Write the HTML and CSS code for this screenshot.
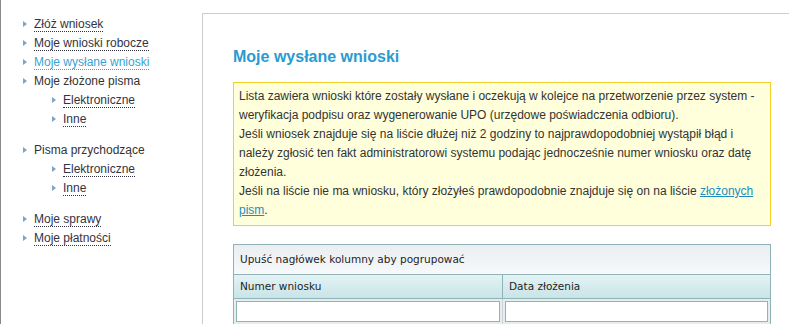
FILE: index.html
```html
<!DOCTYPE html>
<html lang="pl">
<head>
<meta charset="utf-8">
<title>Moje wysłane wnioski</title>
<link rel="stylesheet" href="styles.css">
</head>
<body>
<div class="page">
  <nav class="sidebar">
    <ul class="menu">
      <li><span class="item"><svg class="bullet" width="4" height="6" viewBox="0 0 4 6"><polygon points="0,0 4,3 0,6"/></svg><a href="#" class="link">Złóż wniosek</a></span></li>
      <li><span class="item"><svg class="bullet" width="4" height="6" viewBox="0 0 4 6"><polygon points="0,0 4,3 0,6"/></svg><a href="#" class="link">Moje wnioski robocze</a></span></li>
      <li><span class="item"><svg class="bullet" width="4" height="6" viewBox="0 0 4 6"><polygon points="0,0 4,3 0,6"/></svg><a href="#" class="link active">Moje wysłane wnioski</a></span></li>
      <li class="group"><span class="item"><svg class="bullet" width="4" height="6" viewBox="0 0 4 6"><polygon points="0,0 4,3 0,6"/></svg><span class="label">Moje złożone pisma</span></span>
        <ul class="submenu">
          <li><span class="item"><svg class="bullet" width="4" height="6" viewBox="0 0 4 6"><polygon points="0,0 4,3 0,6"/></svg><a href="#" class="link">Elektroniczne</a></span></li>
          <li><span class="item"><svg class="bullet" width="4" height="6" viewBox="0 0 4 6"><polygon points="0,0 4,3 0,6"/></svg><a href="#" class="link">Inne</a></span></li>
        </ul>
      </li>
      <li class="group"><span class="item"><svg class="bullet" width="4" height="6" viewBox="0 0 4 6"><polygon points="0,0 4,3 0,6"/></svg><span class="label">Pisma przychodzące</span></span>
        <ul class="submenu">
          <li><span class="item"><svg class="bullet" width="4" height="6" viewBox="0 0 4 6"><polygon points="0,0 4,3 0,6"/></svg><a href="#" class="link">Elektroniczne</a></span></li>
          <li><span class="item"><svg class="bullet" width="4" height="6" viewBox="0 0 4 6"><polygon points="0,0 4,3 0,6"/></svg><a href="#" class="link">Inne</a></span></li>
        </ul>
      </li>
      <li><span class="item"><svg class="bullet" width="4" height="6" viewBox="0 0 4 6"><polygon points="0,0 4,3 0,6"/></svg><a href="#" class="link">Moje sprawy</a></span></li>
      <li><span class="item"><svg class="bullet" width="4" height="6" viewBox="0 0 4 6"><polygon points="0,0 4,3 0,6"/></svg><a href="#" class="link">Moje płatności</a></span></li>
    </ul>
  </nav>
  <main class="panel">
    <div class="content">
      <h1 class="title">Moje wysłane wnioski</h1>
      <div class="notice">
        Lista zawiera wnioski które zostały wysłane i oczekują w kolejce na przetworzenie przez system - weryfikacja podpisu oraz wygenerowanie UPO (urzędowe poświadczenia odbioru).<br>
        Jeśli wniosek znajduje się na liście dłużej niż 2 godziny to najprawdopodobniej wystąpił błąd i należy zgłosić ten fakt administratorowi systemu podając jednocześnie numer wniosku oraz datę złożenia.<br>
        Jeśli na liście nie ma wniosku, który złożyłeś prawdopodobnie znajduje się on na liście <a href="#" class="notice-link">złożonych</a> <a href="#" class="notice-link">pism</a>.
      </div>
      <div class="grid">
        <div class="group-panel">Upuść nagłówek kolumny aby pogrupować</div>
        <div class="grid-row header-row">
          <div class="cell">Numer wniosku</div>
          <div class="cell">Data złożenia</div>
        </div>
        <div class="grid-row filter-row">
          <div class="cell"><input class="filter" type="text"></div>
          <div class="cell"><input class="filter" type="text"></div>
        </div>
      </div>
    </div>
  </main>
</div>
</body>
</html>
```
FILE: styles.css
```css
html, body {
  margin: 0;
  padding: 0;
  background: #ffffff;
  overflow: hidden;
}
body {
  font-family: "Liberation Sans", Arial, sans-serif;
  font-size: 12px;
  color: #333333;
}
.page {
  display: flex;
  border-left: 1px solid #8a8a8a;
  height: 100vh;
  box-sizing: border-box;
}
.sidebar {
  width: 201px;
  flex: none;
  padding-top: 14px;
}
.menu, .submenu {
  list-style: none;
  margin: 0;
  padding: 0;
}
.menu {
  padding-left: 22px;
}
.submenu {
  padding-left: 29px;
}
.menu .group {
  margin-bottom: 12px;
}
.item {
  display: flex;
  align-items: center;
  gap: 7px;
  height: 19px;
}
.bullet {
  flex: none;
  fill: #7ea4c4;
  margin-top: 1px;
}
.link, .label {
  line-height: 14px;
  margin-top: 2px;
}
.link {
  color: #333344;
  text-decoration: none;
  border-bottom: 1px dotted #333344;
}
.link.active {
  color: #36a3d5;
  border-bottom-color: #36a3d5;
}
.label {
  color: #333333;
  border-bottom: 1px solid transparent;
}
.panel {
  flex: 1;
  margin-top: 13px;
  border-top: 1px solid #cccccc;
  border-left: 1px solid #cccccc;
  overflow: hidden;
}
.content {
  width: 538px;
  margin-left: 30px;
}
.title {
  margin: 33px 0 16px;
  font-size: 16px;
  line-height: 19px;
  font-weight: bold;
  color: #2a9bd0;
}
.notice {
  border: 1px solid #f2d02a;
  background: #ffffdc;
  padding: 4px 5px 5px;
  line-height: 19px;
  color: #333333;
}
.notice-link {
  color: #1b8dc2;
  text-decoration: underline;
}
.grid {
  margin-top: 18px;
  border: 1px solid #8fb3b7;
  font-family: "DejaVu Sans", Tahoma, sans-serif;
  font-size: 10.5px;
  color: #1e1e1e;
}
.group-panel {
  height: 29px;
  line-height: 29px;
  padding-left: 6px;
  background: linear-gradient(#eaeef1, #f7f9fb);
}
.grid-row {
  display: grid;
  grid-template-columns: 268px 1fr;
}
.header-row {
  height: 23px;
  border-top: 1px solid #8fb3b7;
  border-bottom: 1px solid #8fb3b7;
  background: linear-gradient(#e2f3f5, #c9e4e7);
}
.header-row .cell {
  line-height: 23px;
  padding-left: 6px;
}
.header-row .cell + .cell {
  border-left: 1px solid #8fb3b7;
}
.filter-row {
  background: #e7edef;
}
.filter-row .cell {
  padding: 2px;
}
.filter-row .cell + .cell {
  border-left: 1px solid #c8d4d6;
}
.filter {
  display: block;
  box-sizing: border-box;
  width: 100%;
  height: 21px;
  margin: 0;
  border: 1px solid #8fb3b7;
  background: #ffffff;
  padding: 0 3px;
}
```
